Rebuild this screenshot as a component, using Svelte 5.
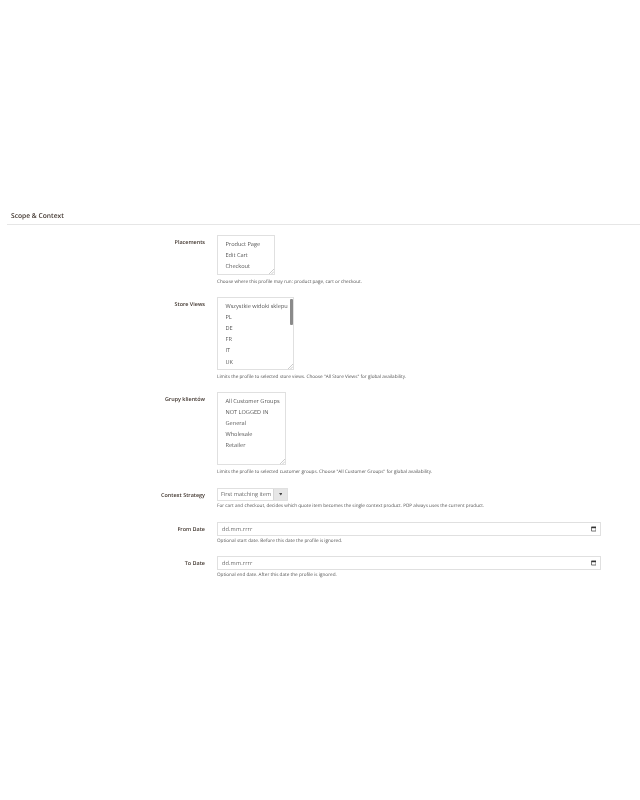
<script>
  const fields = [
    {
      label: 'Placements',
      size: 'placements',
      options: ['Product Page', 'Edit Cart', 'Checkout'],
      note: 'Choose where this profile may run: product page, cart or checkout.'
    },
    {
      label: 'Store Views',
      size: 'stores',
      scroll: true,
      options: ['Wszystkie widoki sklepu', 'PL', 'DE', 'FR', 'IT', 'UK'],
      note: 'Limits the profile to selected store views. Choose "All Store Views" for global availability.'
    },
    {
      label: 'Grupy klientów',
      size: 'groups',
      options: ['All Customer Groups', 'NOT LOGGED IN', 'General', 'Wholesale', 'Retailer'],
      note: 'Limits the profile to selected customer groups. Choose "All Customer Groups" for global availability.'
    }
  ];

  const dates = [
    { label: 'From Date', note: 'Optional start date. Before this date the profile is ignored.' },
    { label: 'To Date', note: 'Optional end date. After this date the profile is ignored.' }
  ];
</script>

<main class="page">
  <h2 class="title">Scope &amp; Context</h2>

  {#each fields as field}
    <section class="row">
      <div class="label">{field.label}</div>
      <div class="control">
        <div class="multi {field.size}">
          {#each field.options as option}
            <div class="option">{option}</div>
          {/each}
          {#if field.scroll}
            <span class="thumb"></span>
          {/if}
          <svg class="grip" width="5" height="5" viewBox="0 0 5 5">
            <path d="M5 0L0 5M5 2.5L2.5 5" stroke="#aaa" stroke-width="0.6" fill="none" />
          </svg>
        </div>
        <p class="note">{field.note}</p>
      </div>
    </section>
  {/each}

  <section class="row strategy-row">
    <div class="label">Context Strategy</div>
    <div class="control">
      <div class="select">
        <span class="value">First matching item</span>
        <span class="arrow">
          <svg width="3.5" height="2.5" viewBox="0 0 4 3"><path d="M0 0H4L2 3Z" fill="#444" /></svg>
        </span>
      </div>
      <p class="note strategy">For cart and checkout, decides which quote item becomes the single context product. PDP always uses the current product.</p>
    </div>
  </section>

  {#each dates as date}
    <section class="row">
      <div class="label">{date.label}</div>
      <div class="control">
        <div class="date">
          <span>dd.mm.rrrr</span>
          <svg width="5.5" height="5.5" viewBox="0 0 6 6">
            <path d="M0.5 1H5.5V5.5H0.5Z" fill="none" stroke="#444" stroke-width="0.8" />
            <path d="M0.5 1H5.5V2.4H0.5Z" fill="#333" />
          </svg>
        </div>
        <p class="note date-note">{date.note}</p>
      </div>
    </section>
  {/each}
</main>

<style>
  :global(body) {
    background: #fff;
  }

  .page {
    padding-top: 211px;
    font-family: "Open Sans", "Noto Sans", sans-serif;
    color: #41362f;
    text-rendering: geometricPrecision;
    filter: blur(0.35px);
  }

  .title {
    margin: 0 0 10px 7px;
    padding: 0 0 3px 4px;
    height: 10px;
    border-bottom: 1px solid #e6e6e6;
    font-size: 6.7px;
    line-height: 10px;
    font-weight: 600;
  }

  .row {
    display: grid;
    grid-template-columns: 205px 384px;
    column-gap: 12px;
    margin-bottom: 12.5px;
  }

  .row:has(.groups) {
    margin-bottom: 13.5px;
  }

  .strategy-row {
    margin-bottom: 13px;
  }

  .label {
    padding-top: 3px;
    text-align: right;
    font-size: 5.45px;
    line-height: 8px;
    font-weight: 600;
  }

  .control {
    min-width: 0;
  }

  .multi {
    position: relative;
    box-sizing: border-box;
    border: 1px solid #e0e0e0;
    padding: 2.6px 0 0 7.5px;
    font-size: 5.6px;
    color: #555;
  }

  .placements {
    width: 58px;
    height: 40px;
  }

  .stores {
    width: 77px;
    height: 73px;
  }

  .groups {
    width: 69px;
    height: 73px;
  }

  .option {
    height: 11.2px;
    line-height: 11.2px;
    white-space: nowrap;
  }

  .thumb {
    position: absolute;
    top: 0.5px;
    right: 0;
    width: 3px;
    height: 26px;
    border-radius: 1px;
    background: #8a8a8a;
  }

  .grip {
    position: absolute;
    right: 0;
    bottom: 0;
  }

  .note {
    margin: 3.5px 0 0;
    font-size: 4.67px;
    line-height: 6px;
    color: #555;
    white-space: nowrap;
  }

  .select {
    display: flex;
    box-sizing: border-box;
    width: 71px;
    height: 13px;
    border: 1px solid #e0e0e0;
    font-size: 5.6px;
    line-height: 11px;
    color: #666;
  }

  .value {
    flex: 1;
    padding-left: 3px;
    white-space: nowrap;
  }

  .arrow {
    display: flex;
    align-items: center;
    justify-content: center;
    width: 13px;
    background: #e6e6e6;
    border-left: 1px solid #d6d6d6;
  }

  .strategy {
    margin-top: 2px;
  }

  .date {
    display: flex;
    align-items: center;
    justify-content: space-between;
    box-sizing: border-box;
    width: 384px;
    height: 14px;
    padding: 0 4px;
    border: 1px solid #e0e0e0;
    font-size: 5.6px;
    letter-spacing: 0.1px;
    color: #666;
  }

  .date-note {
    margin-top: 1.5px;
  }
</style>
